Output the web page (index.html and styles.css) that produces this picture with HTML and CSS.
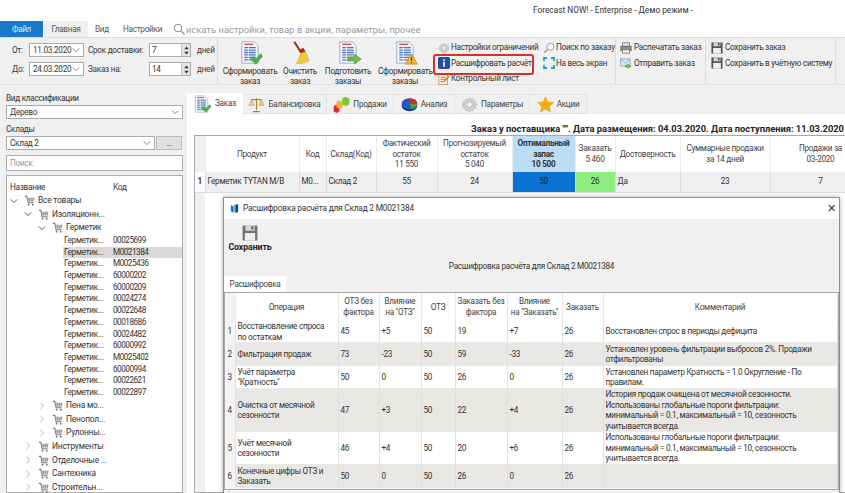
FILE: index.html
```html
<!DOCTYPE html>
<html lang="ru">
<head>
<meta charset="utf-8">
<title>Forecast NOW!</title>
<link rel="stylesheet" href="styles.css">
</head>
<body>
<svg class="defs" width="0" height="0">
  <defs>
    <symbol id="doc" viewBox="0 0 24 28"><path d="M2 1h15l5 5v21H2z" fill="#f4f6fb" stroke="#8fa3c4"/><path d="M5 4h11" stroke="#c33" stroke-width="1.4"/><path d="M5 8h14M5 11h14M5 14h14M5 17h14M5 20h14M5 23h14" stroke="#4f78b5" stroke-width="1.6"/><path d="M10 7v17" stroke="#f4f6fb"/></symbol>
    <symbol id="check" viewBox="0 0 16 14"><path d="M1 7l3-3 3 3 6-6 2 3-8 9z" fill="#4caf50" stroke="#2f8a34" stroke-width=".6"/></symbol>
    <symbol id="broom" viewBox="0 0 24 32"><path d="M3 1l9 14" stroke="#7a4a1c" stroke-width="3"/><path d="M9 12l6-3 3 5-6 3z" fill="#b3261e"/><path d="M11 17l7-3c2 5 4 9 5 12-5 3-11 5-17 4 2-4 4-8 5-13z" fill="#eec93b" stroke="#c79a1b" stroke-width=".6"/></symbol>
    <symbol id="arrow" viewBox="0 0 16 12"><path d="M1 4h7V1l7 5-7 5V8H1z" fill="#6fbf4b" stroke="#3f8f2a" stroke-width=".7"/></symbol>
    <symbol id="warn" viewBox="0 0 16 14"><path d="M8 1l7 12H1z" fill="#f2b632" stroke="#b57f12" stroke-width=".7"/><path d="M8 5v4M8 10.500v1.500" stroke="#5c3a05" stroke-width="1.300"/></symbol>
    <symbol id="gear" viewBox="0 0 24 24"><path d="M12 2l2 3 3-1 1 3 3 1-1 3 3 1-3 2 1 3-3 1-1 3-3-1-2 3-2-3-3 1-1-3-3-1 1-3-3-2 3-1-1-3 3-1 1-3 3 1z" fill="#cfcfcf" stroke="#b5b5b5"/><circle cx="12" cy="12" r="4" fill="#f0f0f0" stroke="#aaa"/></symbol>
    <symbol id="info" viewBox="0 0 14 14"><rect x=".5" y=".5" width="13" height="13" rx="1.500" fill="#1f4fa8" stroke="#12357a"/><path d="M7 5.500v6M7 2.500v1.800" stroke="#fff" stroke-width="2"/></symbol>
    <symbol id="list" viewBox="0 0 14 14"><rect x="1" y="2" width="10" height="11.500" fill="#fbf3dd" stroke="#c9935a"/><path d="M3 5h6M3 7.500h6M3 10h4" stroke="#9c7a50"/><path d="M7 9l5-6 1.500 1-5 6-2 1z" fill="#e2762a"/></symbol>
    <symbol id="lens" viewBox="0 0 14 14"><circle cx="8.500" cy="5.500" r="4" fill="#eef3fa" stroke="#9db3cc" stroke-width="1.300"/><path d="M5.500 8.500L1.500 12.500" stroke="#a8a8a8" stroke-width="2"/></symbol>
    <symbol id="full" viewBox="0 0 12 12"><path d="M1 4V1h3M8 1h3v3M11 8v3H8M4 11H1V8" fill="none" stroke="#15a5c9" stroke-width="1.800"/></symbol>
    <symbol id="print" viewBox="0 0 14 14"><rect x="3" y="1" width="8" height="4" fill="#e9e9e9" stroke="#777"/><rect x="1" y="5" width="12" height="5" fill="#8a8a8a" stroke="#666"/><rect x="3" y="9" width="8" height="4" fill="#f2f2f2" stroke="#777"/></symbol>
    <symbol id="mail" viewBox="0 0 16 14"><rect x=".5" y="1.500" width="13" height="9.500" fill="#d7e6f6" stroke="#7d9cc0"/><path d="M1 2l6 5 6-5" fill="none" stroke="#7d9cc0"/><path d="M7 10h3V8l5 3.500L10 14v-1.500H7z" fill="#6fbf4b" stroke="#3f8f2a" stroke-width=".5"/></symbol>
    <symbol id="floppy" viewBox="0 0 14 14"><path d="M.5.500h13v13H.5z" fill="#555"/><rect x="3" y=".5" width="8" height="4.500" fill="#d5d5d5"/><rect x="8" y="1" width="2" height="3" fill="#555"/><rect x="2.500" y="7" width="9" height="6.500" fill="#efefef"/></symbol>
    <symbol id="scale" viewBox="0 0 24 22"><path d="M12 2v17M5 4h14M7 21h10" stroke="#a98a2a" stroke-width="1.700" fill="none"/><path d="M5 4L1.500 12h7zM19 4l-3.500 8h7z" fill="#f2d98a" stroke="#a98a2a" stroke-width=".8"/></symbol>
    <symbol id="blocks" viewBox="0 0 24 24"><path d="M1 14l4-2 4 2v8l-4 2-4-2z" fill="#e52b2b"/><path d="M5 16V8l4-2 5 2v8l-5 2z" fill="#f2b632"/><path d="M13 12V3l4-2 6 2v9l-5 2z" fill="#7ec83c"/></symbol>
    <symbol id="pie" viewBox="0 0 24 20"><ellipse cx="12" cy="11" rx="11" ry="8.500" fill="#12357a"/><ellipse cx="12" cy="9" rx="11" ry="8" fill="#2457c5"/><path d="M12 9l11 0a11 8 0 0 1-8 7.700z" fill="#3aa43a"/><path d="M12 9V1a11 8 0 0 1 11 8z" fill="#d22b2b"/></symbol>
    <symbol id="star" viewBox="0 0 24 24"><path d="M12 1l3.300 7.500 8 .8-6 5.400 1.800 8L12 18.500 4.900 22.700l1.800-8-6-5.400 8-.8z" fill="#f7a81b" stroke="#e08f10" stroke-width=".6"/></symbol>
    <symbol id="cart" viewBox="0 0 12 12"><path d="M1 1.500h2l1.500 7h6" fill="none" stroke="#777" stroke-width="1.100"/><path d="M3.500 3h8l-1 4h-6z" fill="#9a9a9a"/><path d="M5 3v4M7 3v4M9 3v4" stroke="#ddd" stroke-width=".6"/><circle cx="5" cy="10.500" r="1" fill="#666"/><circle cx="9.500" cy="10.500" r="1" fill="#666"/></symbol>
    <symbol id="open" viewBox="0 0 10 10"><path d="M1 3l4 4 4-4" fill="none" stroke="#444" stroke-width="1.100"/></symbol>
    <symbol id="closed" viewBox="0 0 10 10"><path d="M3 1l4 4-4 4" fill="none" stroke="#aaa" stroke-width="1.100"/></symbol>
    <symbol id="chev" viewBox="0 0 10 10"><path d="M1 3l4 4 4-4" fill="none" stroke="#666"/></symbol>
    <symbol id="search" viewBox="0 0 12 12"><circle cx="5" cy="5" r="3.800" fill="none" stroke="#8c8c8c"/><path d="M8 8l3.500 3.500" stroke="#8c8c8c" stroke-width="1.200"/></symbol>
    <symbol id="logo" viewBox="0 0 10 12"><path d="M1 2l3 2v7L1 9z" fill="#1f6fc4"/><path d="M4 1l2 1v8l-2-1z" fill="#63b5e8"/><path d="M6 2l3-1v9l-3 1z" fill="#15428b"/></symbol>
    <symbol id="spin" viewBox="0 0 8 12"><path d="M4 1.500L1.500 4.500h5zM4 10.500L1.500 7.500h5z" fill="#333"/></symbol>
  </defs>
</svg>

<div class="app">
  <header class="titlebar">Forecast NOW! - Enterprise - Демо режим -</header>

  <nav class="menu">
    <span class="menu-file">Файл</span>
    <span class="menu-home">Главная</span>
    <span class="menu-item">Вид</span>
    <span class="menu-item">Настройки</span>
    <span class="menu-search"><svg class="i12"><use href="#search"/></svg>искать настройки, товар в акции, параметры, прочее</span>
  </nav>

  <section class="ribbon">
    <div class="rgroup dates">
      <div class="drow">
        <span class="dlabel">От:</span>
        <span class="combo date">11.03.2020<svg class="i8"><use href="#chev"/></svg></span>
        <span class="dlabel2">Срок доставки:</span>
        <span class="spin">7<span class="spinbtn"><svg class="i-spin"><use href="#spin"/></svg></span></span>
        <span class="dunit">дней</span>
      </div>
      <div class="drow">
        <span class="dlabel">До:</span>
        <span class="combo date">24.03.2020<svg class="i8"><use href="#chev"/></svg></span>
        <span class="dlabel2">Заказ на:</span>
        <span class="spin">14<span class="spinbtn"><svg class="i-spin"><use href="#spin"/></svg></span></span>
        <span class="dunit">дней</span>
      </div>
    </div>
    <div class="rgroup bigs">
      <div class="big b1"><span class="bigicon"><svg class="i-doc"><use href="#doc"/></svg><svg class="i-over"><use href="#check"/></svg></span>Сформировать заказ</div>
      <div class="big b2"><span class="bigicon"><svg class="i-broom"><use href="#broom"/></svg></span>Очистить заказ</div>
      <div class="big b3"><span class="bigicon"><svg class="i-doc"><use href="#doc"/></svg><svg class="i-over"><use href="#arrow"/></svg></span>Подготовить заказы</div>
      <div class="big b4"><span class="bigicon"><svg class="i-doc"><use href="#doc"/></svg><svg class="i-over"><use href="#warn"/></svg></span>Сформировать заказы</div>
    </div>
    <div class="rgroup smalls s1">
      <div class="sm"><svg class="i12"><use href="#gear"/></svg>Настройки ограничений</div>
      <div class="sm hl"><svg class="i12"><use href="#info"/></svg>Расшифровать расчёт</div>
      <div class="sm"><svg class="i12"><use href="#list"/></svg>Контрольный лист</div>
    </div>
    <div class="rgroup smalls s2 sep">
      <div class="sm"><svg class="i12"><use href="#lens"/></svg>Поиск по заказу</div>
      <div class="sm"><svg class="i12"><use href="#full"/></svg>На весь экран</div>
    </div>
    <div class="rgroup smalls s3 sep">
      <div class="sm"><svg class="i12"><use href="#print"/></svg>Распечатать заказ</div>
      <div class="sm"><svg class="i12"><use href="#mail"/></svg>Отправить заказ</div>
    </div>
    <div class="rgroup smalls s4 sep">
      <div class="sm"><svg class="i12"><use href="#floppy"/></svg>Сохранить заказ</div>
      <div class="sm"><svg class="i12"><use href="#floppy"/></svg>Сохранить в учётную систему</div>
    </div>
  </section>

  <main class="main">
    <aside class="side">
      <label class="slabel">Вид классификации</label>
      <span class="combo wide">Дерево<svg class="i8"><use href="#chev"/></svg></span>
      <label class="slabel second">Склады</label>
      <div class="whrow">
        <span class="combo wh">Склад 2<svg class="i8"><use href="#chev"/></svg></span>
        <span class="dots">...</span>
      </div>
      <div class="searchbox">Поиск</div>
      <div class="tree">
        <div class="tree-head"><span>Название</span><span>Код</span></div>
        <div class="node l0"><svg class="i8"><use href="#open"/></svg><svg class="i-cart"><use href="#cart"/></svg>Все товары</div>
        <div class="node l1"><svg class="i8"><use href="#open"/></svg><svg class="i-cart"><use href="#cart"/></svg>Изоляционн...</div>
        <div class="node l2"><svg class="i8"><use href="#open"/></svg><svg class="i-cart"><use href="#cart"/></svg>Герметик</div>
        <div class="leaf"><span>Герметик...</span><span>00025699</span></div>
        <div class="leaf sel"><span>Герметик...</span><span>M0021384</span></div>
        <div class="leaf"><span>Герметик...</span><span>M0025436</span></div>
        <div class="leaf"><span>Герметик...</span><span>60000202</span></div>
        <div class="leaf"><span>Герметик...</span><span>60000209</span></div>
        <div class="leaf"><span>Герметик...</span><span>00024274</span></div>
        <div class="leaf"><span>Герметик...</span><span>00022648</span></div>
        <div class="leaf"><span>Герметик...</span><span>00018686</span></div>
        <div class="leaf"><span>Герметик...</span><span>00024482</span></div>
        <div class="leaf"><span>Герметик...</span><span>60000992</span></div>
        <div class="leaf"><span>Герметик...</span><span>M0025402</span></div>
        <div class="leaf"><span>Герметик...</span><span>60000994</span></div>
        <div class="leaf"><span>Герметик...</span><span>00022621</span></div>
        <div class="leaf"><span>Герметик...</span><span>00022897</span></div>
        <div class="node l2"><svg class="i8"><use href="#closed"/></svg><svg class="i-cart"><use href="#cart"/></svg>Пена мо...</div>
        <div class="node l2"><svg class="i8"><use href="#closed"/></svg><svg class="i-cart"><use href="#cart"/></svg>Пенопол...</div>
        <div class="node l2"><svg class="i8"><use href="#closed"/></svg><svg class="i-cart"><use href="#cart"/></svg>Рулонны...</div>
        <div class="node l1"><svg class="i8"><use href="#closed"/></svg><svg class="i-cart"><use href="#cart"/></svg>Инструменты</div>
        <div class="node l1"><svg class="i8"><use href="#closed"/></svg><svg class="i-cart"><use href="#cart"/></svg>Отделочные ...</div>
        <div class="node l1"><svg class="i8"><use href="#closed"/></svg><svg class="i-cart"><use href="#cart"/></svg>Сантехника</div>
        <div class="node l1"><svg class="i8"><use href="#closed"/></svg><svg class="i-cart"><use href="#cart"/></svg>Строительн...</div>
      </div>
    </aside>

    <div class="content">
      <div class="ctabs">
        <span class="ctab on t1"><span class="tabicon"><svg class="i-doc-s"><use href="#doc"/></svg><svg class="i-tabcheck"><use href="#check"/></svg></span>Заказ</span>
        <span class="ctab t2"><svg class="i16"><use href="#scale"/></svg>Балансировка</span>
        <span class="ctab t3"><svg class="i16"><use href="#blocks"/></svg>Продажи</span>
        <span class="ctab t4"><svg class="i16"><use href="#pie"/></svg>Анализ</span>
        <span class="ctab t5"><svg class="i16"><use href="#gear"/></svg>Параметры</span>
        <span class="ctab t6"><svg class="i16"><use href="#star"/></svg>Акции</span>
      </div>
      <div class="cpanel">
        <div class="ordertitle">Заказ у поставщика "". Дата размещения: 04.03.2020. Дата поступления: 11.03.2020</div>
        <div class="gridwrap">
          <table class="order">
            <colgroup><col class="oc0"><col class="oc1"><col class="oc2"><col class="oc3"><col class="oc4"><col class="oc5"><col class="oc6"><col class="oc7"><col class="oc8"><col class="oc9"><col class="oc10"></colgroup>
            <thead>
              <tr>
                <th></th><th>Продукт</th><th>Код</th><th>Склад(Код)</th>
                <th>Фактический<br>остаток<br>11 550</th>
                <th>Прогнозируемый<br>остаток<br>5 040</th>
                <th class="opt">Оптимальный<br>запас<br>10 500</th>
                <th>Заказать<br>5 460</th>
                <th>Достоверность</th>
                <th>Суммарные продажи<br>за 14 дней</th>
                <th>Продажи за<br>03-2020</th>
              </tr>
            </thead>
            <tbody>
              <tr>
                <td class="rn">1</td><td class="left">Герметик TYTAN M/B</td><td class="left">M0...</td><td class="left">Склад 2</td>
                <td>55</td><td>24</td><td class="blue">50</td><td class="green">26</td><td class="left">Да</td><td>23</td><td>7</td>
              </tr>
            </tbody>
          </table>
        </div>
      </div>
    </div>
  </main>

  <section class="dialog">
    <div class="dtitle"><span class="dtitle-text"><svg class="i-logo"><use href="#logo"/></svg>Расшифровка расчёта для Склад 2 М0021384</span><span class="dclose">✕</span></div>
    <div class="dbody">
      <div class="dsave"><svg class="i-save"><use href="#floppy"/></svg><b>Сохранить</b></div>
      <div class="dcaption">Расшифровка расчёта для Склад 2 М0021384</div>
      <div class="dtab">Расшифровка</div>
      <div class="dgrid">
        <table class="calc">
          <colgroup><col class="c0"><col class="c1"><col class="c2"><col class="c3"><col class="c4"><col class="c5"><col class="c6"><col class="c7"><col class="c8"></colgroup>
          <thead>
            <tr class="h0"><th></th><th>Операция</th><th>ОТЗ без<br>фактора</th><th>Влияние<br>на "ОТЗ"</th><th>ОТЗ</th><th>Заказать без<br>фактора</th><th>Влияние<br>на "Заказать"</th><th>Заказать</th><th>Комментарий</th></tr>
          </thead>
          <tbody>
            <tr class="h1"><td class="n">1</td><td>Восстановление спроса<br>по остаткам</td><td>45</td><td>+5</td><td>50</td><td>19</td><td>+7</td><td>26</td><td>Восстановлен спрос в периоды дефицита</td></tr>
            <tr class="h2 alt"><td class="n">2</td><td>Фильтрация продаж</td><td>73</td><td>-23</td><td>50</td><td>59</td><td>-33</td><td>26</td><td>Установлен уровень фильтрации выбросов 2%. Продажи<br>отфильтрованы</td></tr>
            <tr class="h3"><td class="n">3</td><td>Учёт параметра<br>"Кратность"</td><td>50</td><td>0</td><td>50</td><td>26</td><td>0</td><td>26</td><td>Установлен параметр Кратность = 1.0 Округление - По<br>правилам.</td></tr>
            <tr class="h4 alt"><td class="n">4</td><td>Очистка от месячной<br>сезонности</td><td>47</td><td>+3</td><td>50</td><td>22</td><td>+4</td><td>26</td><td>История продаж очищена от месячной сезонности.<br>Использованы глобальные пороги фильтрации:<br>минимальный = 0.1, максимальный = 10, сезонность<br>учитывается всегда.</td></tr>
            <tr class="h5"><td class="n">5</td><td>Учёт месячной<br>сезонности</td><td>46</td><td>+4</td><td>50</td><td>20</td><td>+6</td><td>26</td><td>Использованы глобальные пороги фильтрации:<br>минимальный = 0.1, максимальный = 10, сезонность<br>учитывается всегда.</td></tr>
            <tr class="h6 alt"><td class="n">6</td><td>Конечные цифры ОТЗ и<br>Заказать</td><td>50</td><td>0</td><td>50</td><td>26</td><td>0</td><td>26</td><td></td></tr>
          </tbody>
        </table>
      </div>
    </div>
  </section>
</div>
</body>
</html>
```
FILE: styles.css
```css
* { box-sizing: border-box; }
html, body { margin: 0; padding: 0; height: 100%; overflow: hidden; }
body { font-family: Roboto, "Noto Sans", sans-serif; font-size: 8.2px; letter-spacing: -.28px; line-height: 11px; color: #3a3a3a; background: #fff; }
.defs { position: absolute; }
.app { position: relative; width: 845px; height: 493px; overflow: hidden; display: flex; flex-direction: column; }
svg { flex: none; display: block; }

.titlebar { height: 21px; flex: none; padding: 5px 0 0 533px; white-space: nowrap; color: #333; font-size: 8.3px; letter-spacing: 0; }

.menu { height: 16px; flex: none; display: flex; align-items: center; }
.menu-file { width: 43px; height: 16px; background: #1979ca; color: #dcecfa; text-align: center; line-height: 16px; }
.menu-home { width: 44px; margin-left: 1px; height: 16px; background: #f0f0f0; text-align: center; line-height: 16px; color: #555; }
.menu-item { margin-left: 7px; margin-right: 8px; color: #555; }
.menu-item + .menu-item { margin-left: 6px; }
.menu-search { display: flex; align-items: center; gap: 1px; margin-left: 3px; color: #999; font-size: 9.2px; letter-spacing: .1px; }
.i12 { width: 12px; height: 12px; }
.i8 { width: 8px; height: 8px; }

.ribbon { height: 48px; flex: none; display: flex; background: #f0f0f0; border-top: 1px solid #dcdcdc; border-bottom: 1px solid #e3e3e3; }
.rgroup { height: 46px; }
.dates { width: 218px; border-right: 1px solid #dedede; padding: 5px 0 0 12px; display: flex; flex-direction: column; gap: 5px; }
.drow { display: flex; align-items: center; height: 14px; white-space: nowrap; }
.dlabel { width: 17px; }
.dlabel2 { width: 61px; margin-left: 4px; }
.dunit { margin-left: 6px; }
.combo { display: flex; align-items: center; justify-content: space-between; background: #fff; border: 1px solid #ababab; padding: 0 3px; height: 14px; color: #333; }
.date { width: 55px; }
.spin { width: 42px; height: 14px; background: #fff; border: 1px solid #ababab; display: flex; justify-content: space-between; padding-left: 2px; line-height: 12px; color: #333; }
.spinbtn { width: 9px; background: #e4e4e4; border-left: 1px solid #c4c4c4; display: flex; align-items: center; justify-content: center; }
.i-spin { width: 7px; height: 11px; }

.bigs { display: flex; width: 215px; padding-top: 3px; }
.big { text-align: center; line-height: 9.5px; color: #333; flex: none; }
.bigicon { display: block; position: relative; width: 26px; height: 24px; margin: 0 auto 2px; }
.i-doc { width: 20px; height: 23px; margin-left: 3px; }
.i-over { position: absolute; right: -1px; bottom: 0; width: 15px; height: 12px; }
.i-broom { width: 22px; height: 24px; margin-left: 3px; }
.b1 { width: 64px; }
.b2 { width: 36px; }
.b3 { width: 60px; }
.b4 { width: 54px; }

.smalls { display: flex; flex-direction: column; padding-top: 2px; }
.sep { border-right: 1px solid #dedede; }
.sm { display: flex; flex: none; align-items: center; gap: 1px; height: 15.5px; white-space: nowrap; color: #333; }
.s1 { width: 110px; padding-left: 5px; }
.s2 { width: 73px; }
.s3 { width: 90px; padding-left: 4px; }
.s3 .sm, .s4 .sm { gap: 2px; }
.s4 { width: 130px; padding-left: 5px; }
.hl { position: relative; }
.hl::after { content: ""; position: absolute; left: -5px; right: 9px; top: -1.5px; height: 17px; border: 2px solid #d9302a; border-radius: 3px; }

.main { flex: 1; display: flex; min-height: 0; background: #f0f0f0; }
.side { width: 187px; flex: none; padding: 7px 3px 0 6px; display: flex; flex-direction: column; }
.slabel { height: 12px; line-height: 12px; color: #333; }
.second { margin-top: 4px; margin-bottom: 1px; }
.wide { height: 14px; width: 177px; margin-top: 1px; }
.whrow { display: flex; gap: 1px; }
.wh { width: 149px; }
.dots { width: 26px; height: 14px; background: #e1e1e1; border: 1px solid #bdbdbd; text-align: center; line-height: 12px; }
.searchbox { width: 177px; height: 16px; margin-top: 5px; background: #fff; border: 1px solid #ababab; padding-left: 3px; line-height: 15px; color: #999; }
.tree { width: 177px; flex: 1; margin-top: 4px; background: #fff; border: 1px solid #ababab; overflow: hidden; color: #333; }
.tree-head { display: grid; grid-template-columns: 103px 1fr; height: 18px; padding: 0 0 1px 3px; align-items: end; align-content: end; }
.node { display: flex; align-items: center; height: 13.6px; white-space: nowrap; font-size: 8.4px; letter-spacing: -.2px; }
.node .i8 { margin-right: 6px; }
.i-cart { width: 11px; height: 11px; margin-right: 3px; }
.l0 { padding-left: 3px; }
.l1 { padding-left: 17px; }
.l2 { padding-left: 31px; }
.leaf { display: grid; grid-template-columns: 49px 1fr; height: 11.72px; line-height: 11.72px; margin-left: 56px; padding-left: 1px; }
.leaf span + span { letter-spacing: -.5px; }
.sel { background: #d9d9d9; }

.content { flex: 1; min-width: 0; display: flex; flex-direction: column; padding-top: 8px; }
.ctabs { height: 21px; flex: none; display: flex; align-items: flex-end; }
.ctab { height: 20px; display: flex; align-items: center; justify-content: center; gap: 3px; border: 1px solid #e2e2e2; border-left: 0; color: #444; }
.ctab.on { height: 21px; background: #fff; border: 0; }
.t1 { width: 56px; }
.t2 { width: 84px; }
.t3 { width: 67px; }
.t4 { width: 61px; }
.t5 { width: 75px; }
.t6 { width: 57px; }
.i16 { width: 17px; height: 17px; }
.tabicon { position: relative; display: block; width: 18px; height: 18px; }
.i-doc-s { width: 15px; height: 18px; }
.i-tabcheck { position: absolute; right: 0; bottom: 0; width: 11px; height: 9px; }
.cpanel { flex: 1; min-height: 0; background: #fff; padding: 8px 0 0 7px; display: flex; flex-direction: column; overflow: hidden; }
.ordertitle { height: 13px; padding-left: 277px; white-space: nowrap; font-weight: 700; font-size: 9.3px; letter-spacing: 0; line-height: 13px; color: #222; flex: none; }
.gridwrap { flex: 1; width: 680px; background: linear-gradient(to right, #f0f0f0 10px, #fff 10px); border: 1px solid #a8a8a8; }
table { border-collapse: collapse; table-layout: fixed; }
.order { width: 676px; }
.oc0 { width: 10px; } .oc1 { width: 94px; } .oc2 { width: 27px; } .oc3 { width: 50px; } .oc4 { width: 61px; } .oc5 { width: 75px; }
.oc6 { width: 63px; } .oc7 { width: 40px; } .oc8 { width: 65px; } .oc9 { width: 90px; } .oc10 { width: 101px; }
.order th { height: 36px; padding: 0; font-weight: 400; text-align: center; border-right: 1px solid #ececec; color: #444; line-height: 10.6px; white-space: nowrap; }
.order th.opt { background: #bcdcf4; font-weight: 700; color: #333; }
.order td { height: 20px; padding: 0 1px; text-align: center; background: #efefef; border-right: 1px solid #dcdcdc; border-bottom: 1px solid #dcdcdc; white-space: nowrap; overflow: hidden; color: #333; }
.order td.left { text-align: left; padding-left: 2px; }
.order td.rn { font-weight: 700; background: #fff; }
.order td.blue { background: #0a72d2; color: #123; }
.order td.green { background: #8fec7f; }

.dialog { position: absolute; left: 223px; top: 197px; width: 617px; height: 300px; background: #f0f0f0; border: 1px solid #8f8f8f; box-shadow: 0 0 5px rgba(0,0,0,.3); }
.dtitle { height: 21px; background: #fff; display: flex; justify-content: space-between; align-items: center; padding: 0 3px 0 6px; color: #333; font-size: 8.3px; letter-spacing: -.2px; }
.dtitle-text { display: flex; align-items: center; gap: 4px; }
.i-logo { width: 9px; height: 11px; }
.dclose { font-size: 11px; color: #333; }
.dsave { width: 52px; padding: 6px 0 0; height: 36px; text-align: center; color: #222; }
.dsave b { font-size: 8.8px; letter-spacing: -.1px; }
.i-save { width: 16px; height: 16px; margin: 0 auto 1px; opacity: .8; }
.dcaption { height: 19px; text-align: center; line-height: 12px; padding-top: 4px; margin-top: 1px; color: #333; }
.dtab { width: 62px; height: 16px; background: #fff; text-align: center; line-height: 16px; margin-top: 1px; color: #444; }
.dgrid { width: 615px; height: 198px; background: #f3f3f3; border: 1px solid #a8a8a8; }
.calc { width: 612px; }
.c0 { width: 10px; } .c1 { width: 103px; } .c2 { width: 41px; } .c3 { width: 42px; } .c4 { width: 34px; } .c5 { width: 52px; } .c6 { width: 55px; } .c7 { width: 41px; } .c8 { width: 234px; }
.calc th { font-weight: 400; background: #fff; padding: 0; text-align: center; border-right: 1px solid #e8e8e8; line-height: 11px; white-space: nowrap; color: #444; }
.calc td { background: #fff; padding: 0 2px; border-right: 1px solid #e0e0e0; line-height: 10.6px; vertical-align: middle; color: #333; overflow: hidden; white-space: nowrap; }
.calc tr.alt td { background: #e9e8e4; }
.calc td.n, .calc th:first-child { background: #f3f3f3; text-align: center; padding: 0; }
.calc tr.alt td.n { background: #f3f3f3; }
.h0 th { height: 28px; }
.h1 td { height: 20px; }
.h2 td { height: 24px; }
.h3 td { height: 22px; }
.h4 td { height: 44px; }
.h5 td { height: 32px; }
.h6 td { height: 24px; }
```
